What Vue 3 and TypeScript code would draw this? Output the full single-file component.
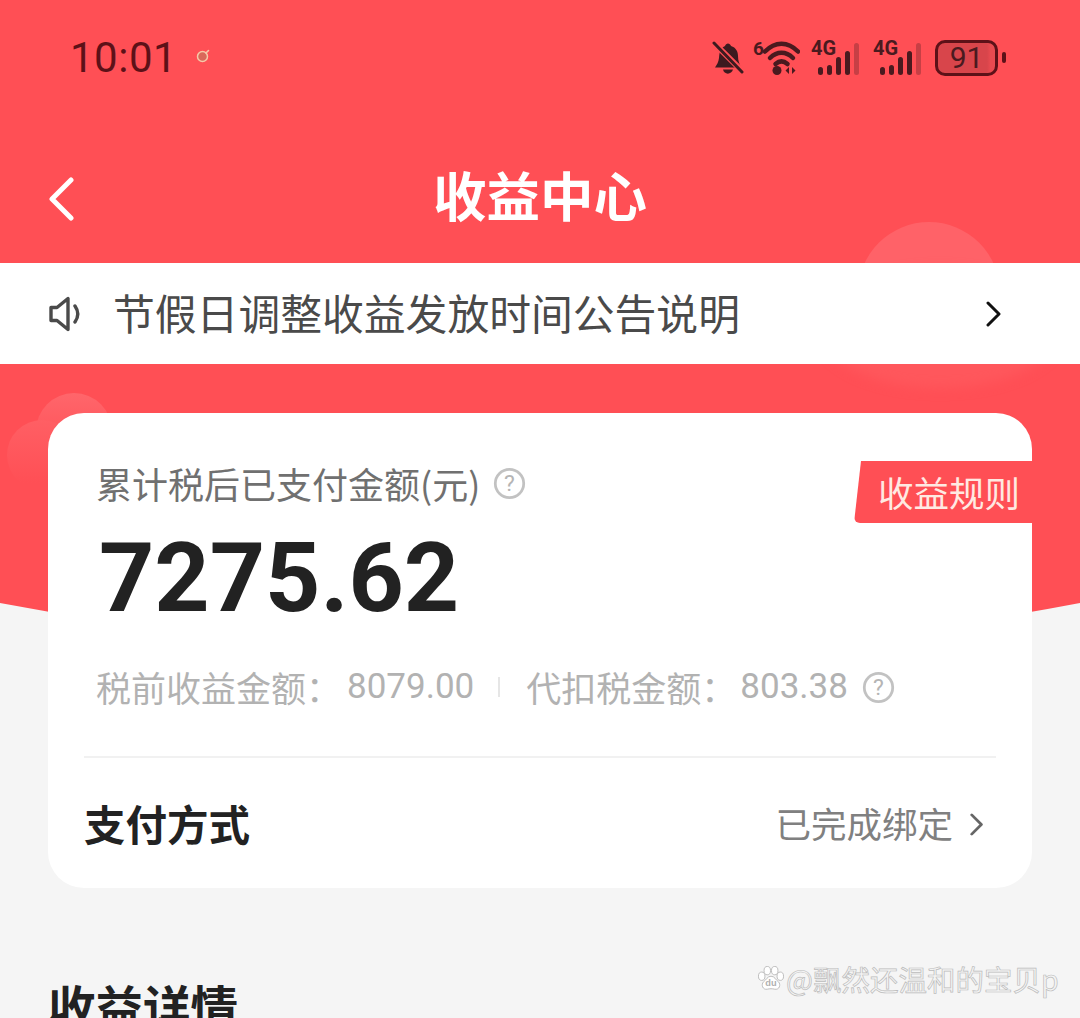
<script setup lang="ts">
const notice = '节假日调整收益发放时间公告说明';
const bars = [8, 10, 18, 24, 32];
</script>

<template>
  <div class="page">
    <div class="hero">
      <div class="cloud cloud-right-top"></div>
      <div class="cloud cloud-right-low"></div>
      <div class="cloud cloud-left-a"></div>
      <div class="cloud cloud-left-b"></div>
    </div>

    <div class="content">
      <div class="status-bar">
        <div class="status-left">
          <span class="time">10:01</span>
          <svg class="ring" viewBox="0 0 16 16" width="16" height="16">
            <circle cx="7.500" cy="8.500" r="5" fill="#d9685a" stroke="#f5c9a8" stroke-width="1.500" />
            <path d="M11 5l2.500-2.500" stroke="#f5c9a8" stroke-width="1.600" stroke-linecap="round" />
          </svg>
        </div>
        <div class="status-right">
          <svg class="bell" viewBox="0 0 32 36" width="32" height="36">
            <path d="M13 6c1-3.500 5-3.500 6 0 5 1.500 7 5.500 7 10 0 5 1.500 8 3 11.500H3c2-3 3.500-5.500 4-9.500.500-5 1-10 6-12z" fill="#3d1a1f" />
            <path d="M11 29.500c1 5.500 8.500 5.500 10 0z" fill="#3d1a1f" />
            <path d="M3 4l27 27" stroke="#ff4f55" stroke-width="6" />
            <path d="M2 3l28 29" stroke="#3d1a1f" stroke-width="3" stroke-linecap="round" />
          </svg>
          <div class="wifi">
            <span class="wifi-six">6</span>
            <svg viewBox="0 0 37 36" width="37" height="36">
              <path d="M2 11.500c10-10.500 23-10.500 33 0" class="wave" />
              <path d="M7 18c7-7 16-7 23 0" class="wave" />
              <path d="M12.500 24c4-3.500 8-3.500 12 0" class="wave" />
              <circle cx="14" cy="30.500" r="4.500" fill="#4a1a1f" />
              <path d="M26 27l-3.500 3.500 3.500 3.500zM29 27l3.500 3.500-3.500 3.500z" fill="#4a1a1f" />
            </svg>
          </div>
          <div v-for="sim in 2" :key="sim" class="signal">
            <span class="net">4G</span>
            <div class="bars">
              <i v-for="h in bars" :key="h" :style="{ height: h + 'px' }"></i>
            </div>
          </div>
          <div class="battery">
            <div class="battery-body">91</div>
            <div class="battery-cap"></div>
          </div>
        </div>
      </div>

      <div class="nav">
        <svg class="back" viewBox="0 0 28 44" width="28" height="44">
          <path d="M24 3L5 22l19 19" fill="none" stroke="#fff" stroke-width="5" stroke-linecap="round" stroke-linejoin="round" />
        </svg>
        <h1 class="title">收益中心</h1>
      </div>

      <div class="notice">
        <svg class="speaker" viewBox="0 0 34 38" width="34" height="38">
          <path d="M3 12.500h6L20 3.500v31L9 25.500H3z" fill="none" stroke="#4a4a4a" stroke-width="3.400" stroke-linejoin="round" />
          <path d="M27 11c3.500 5 3.500 11 0 16" fill="none" stroke="#4a4a4a" stroke-width="3.400" stroke-linecap="round" />
        </svg>
        <span class="notice-text">{{ notice }}</span>
        <svg class="notice-arrow" viewBox="0 0 16 26" width="16" height="26">
          <path d="M2 2l11 11L2 24" fill="none" stroke="#111" stroke-width="3" stroke-linecap="round" stroke-linejoin="round" />
        </svg>
      </div>

      <div class="card">
        <div class="rule-tag">收益规则</div>
        <div class="total-label">
          <span>累计税后已支付金额(元)</span>
          <svg viewBox="0 0 36 36" width="33" height="33">
            <circle cx="18" cy="18" r="15.500" fill="none" stroke="#c2c2c2" stroke-width="3" />
            <text x="18" y="26.500" text-anchor="middle" class="help-mark">?</text>
          </svg>
        </div>
        <div class="amount">7275.62</div>
        <div class="breakdown">
          <span>税前收益金额：</span><span class="num">8079.00</span>
          <i class="divider"></i>
          <span>代扣税金额：</span><span class="num num-tax">803.38</span>
          <svg viewBox="0 0 36 36" width="33" height="33" class="help-small">
            <circle cx="18" cy="18" r="15.500" fill="none" stroke="#c2c2c2" stroke-width="3" />
            <text x="18" y="26.500" text-anchor="middle" class="help-mark">?</text>
          </svg>
        </div>
        <div class="payment">
          <span class="payment-title">支付方式</span>
          <span class="payment-state">已完成绑定</span>
          <svg class="payment-arrow" viewBox="0 0 16 26" width="14" height="23">
            <path d="M2 2l11 11L2 24" fill="none" stroke="#666" stroke-width="3.200" stroke-linecap="round" stroke-linejoin="round" />
          </svg>
        </div>
      </div>

      <h2 class="section-title">收益详情</h2>
    </div>

    <div class="watermark">
      <svg viewBox="0 0 30 28" width="28" height="26">
        <g fill="#fff" stroke="#b9b9b9" stroke-width="1">
          <ellipse cx="5" cy="11" rx="3.500" ry="4.500" />
          <ellipse cx="11" cy="5" rx="3.500" ry="4.500" />
          <ellipse cx="19" cy="5" rx="3.500" ry="4.500" />
          <ellipse cx="25" cy="11" rx="3.500" ry="4.500" />
          <path d="M15 11c4 0 5 4 8 6 3 3 1 9-4 8-3-.7-5-.7-8 0-5 1-7-5-4-8 3-2 4-6 8-6z" />
        </g>
        <text x="15" y="22" text-anchor="middle" class="du">du</text>
      </svg>
      <span>@飘然还温和的宝贝p</span>
    </div>
  </div>
</template>

<style scoped>
.page {
  position: relative;
  width: 1080px;
  height: 1018px;
  overflow: hidden;
  background: #f5f5f5;
  font-family: "Noto Sans CJK SC", "Noto Sans", sans-serif;
}

.hero {
  position: absolute;
  left: 0;
  top: 0;
  width: 1080px;
  height: 660px;
  background: #ff4f55;
  clip-path: circle(2880px at 540px -2226px);
  overflow: hidden;
}

.cloud {
  position: absolute;
  border-radius: 50%;
}

.cloud-right-top {
  left: 858px;
  top: 222px;
  width: 142px;
  height: 142px;
  background: #ff6268;
}

.cloud-right-low {
  left: 820px;
  top: 270px;
  width: 240px;
  height: 118px;
  background: #ff575c;
  filter: blur(6px);
}

.cloud-left-a {
  left: 36px;
  top: 393px;
  width: 76px;
  height: 76px;
  background: linear-gradient(#ff666b, #ff4f55 85%);
}

.cloud-left-b {
  left: 7px;
  top: 420px;
  width: 70px;
  height: 70px;
  background: linear-gradient(#ff5f64, #ff4f55 90%);
}

.content {
  position: relative;
  display: flex;
  flex-direction: column;
}

.status-bar {
  display: flex;
  align-items: center;
  justify-content: space-between;
  height: 115px;
  padding: 0 74px 0 70px;
}

.status-left {
  display: flex;
  align-items: center;
  gap: 22px;
}

.time {
  font-family: "Roboto", sans-serif;
  font-size: 42px;
  color: #5d1118;
  letter-spacing: 0.5px;
}

.ring {
  margin-left: -4px;
  margin-top: -3px;
}

.status-right {
  display: flex;
  align-items: center;
}

.bell {
  margin-right: 9px;
}

.wifi {
  display: flex;
  align-items: flex-start;
  width: 47px;
  margin-right: 11px;
}

.wifi-six {
  width: 10px;
  font-family: "Roboto", sans-serif;
  font-size: 19px;
  font-weight: 700;
  line-height: 18px;
  color: #4a1a1f;
}

.wave {
  fill: none;
  stroke: #4a1a1f;
  stroke-width: 4.500;
  stroke-linecap: round;
}

.signal {
  position: relative;
  width: 48px;
  height: 36px;
  margin-right: 14px;
}

.net {
  position: absolute;
  left: 0;
  top: 0;
  font-family: "Roboto", sans-serif;
  font-size: 20px;
  font-weight: 700;
  line-height: 17px;
  color: #4a1a1f;
}

.bars {
  position: absolute;
  left: 7px;
  right: 0;
  bottom: 1px;
  display: flex;
  align-items: flex-end;
  gap: 4px;
}

.bars i {
  width: 5px;
  border-radius: 2.500px;
  background: #4a1a1f;
}

.bars i:last-child {
  background: #c73f45;
}

.battery {
  display: flex;
  align-items: center;
  gap: 4px;
}

.battery-body {
  width: 63px;
  height: 36px;
  box-sizing: border-box;
  border: 3px solid #5d1118;
  border-radius: 10px;
  background: linear-gradient(90deg, #d8454b 86%, #e84a50 92%);
  font-family: "Roboto", sans-serif;
  font-size: 30px;
  line-height: 30px;
  text-align: center;
  color: #4a1a1f;
}

.battery-cap {
  width: 4px;
  height: 11px;
  border-radius: 2px;
  background: #5d1118;
}

.nav {
  position: relative;
  display: flex;
  align-items: center;
  justify-content: center;
  height: 148px;
}

.back {
  position: absolute;
  left: 47px;
  top: 62px;
}

.title {
  margin: 0;
  font-size: 53.500px;
  font-weight: 700;
  color: #fff;
  line-height: 1;
  transform: translateY(5px);
}

.notice {
  display: flex;
  align-items: center;
  height: 101px;
  padding: 0 78px 0 48px;
  background: #fff;
}

.notice-text {
  flex: 1;
  margin-left: 31px;
  margin-top: -1px;
  font-size: 41.800px;
  line-height: 1;
  color: #4a4a4a;
}

.card {
  position: relative;
  display: flex;
  flex-direction: column;
  height: 475px;
  box-sizing: border-box;
  margin: 49px 48px 0;
  padding: 47px 36px 0;
  border-radius: 36px;
  background: #fff;
}

.rule-tag {
  position: absolute;
  right: 0;
  top: 48px;
  width: 178px;
  height: 62px;
  box-sizing: border-box;
  padding-left: 24px;
  background: #ff4f55;
  clip-path: polygon(7px 0, 100% 0, 100% 100%, 0 100%);
  border-radius: 6px 0 0 6px;
  font-size: 35.500px;
  line-height: 62px;
  color: #ffe9e2;
}

.total-label {
  display: flex;
  align-items: center;
  gap: 13px;
  padding-left: 12px;
  font-size: 36px;
  line-height: 46px;
  color: #707070;
}

.amount {
  margin-top: 22px;
  padding-left: 15px;
  font-family: "Roboto", sans-serif;
  font-size: 96.500px;
  font-weight: 700;
  line-height: 100px;
  color: #222;
}

.breakdown {
  display: flex;
  align-items: center;
  margin-top: 36px;
  padding-left: 12px;
  font-size: 35px;
  line-height: 46px;
  color: #b2b2b2;
}

.num {
  margin-left: 6px;
  font-family: "Roboto", sans-serif;
  font-size: 35px;
}

.num-tax {
  margin-left: 4px;
}

.divider {
  width: 2px;
  height: 20px;
  margin: 0 26px 0 24px;
  background: #e6e6e6;
}

.help-small {
  margin-left: 14px;
}

.help-mark {
  font-family: "Roboto", sans-serif;
  font-size: 25px;
  fill: #b5b5b5;
}

.payment {
  display: flex;
  align-items: center;
  gap: 17px;
  height: 131px;
  margin-top: 46px;
  border-top: 2px solid #f1f1f1;
  padding-right: 12px;
  box-sizing: border-box;
}

.payment-title {
  flex: 1;
  font-size: 41.500px;
  font-weight: 700;
  color: #222;
}

.payment-state {
  font-size: 35.500px;
  color: #808080;
}

.payment-arrow {
  margin-top: 3px;
}

.section-title {
  margin: 89px 0 0 48px;
  font-size: 47.500px;
  font-weight: 700;
  line-height: 1.2;
  color: #222;
}

.watermark {
  position: absolute;
  left: 757px;
  top: 961px;
  display: flex;
  align-items: center;
  gap: 1px;
  font-size: 28.500px;
  line-height: 36px;
  color: #f4f4f4;
  -webkit-text-stroke: 0.7px #bcbcbc;
}

.du {
  font-family: "Liberation Sans", sans-serif;
  font-size: 10px;
  font-weight: 700;
  fill: #b0b0b0;
  stroke: none;
}
</style>
